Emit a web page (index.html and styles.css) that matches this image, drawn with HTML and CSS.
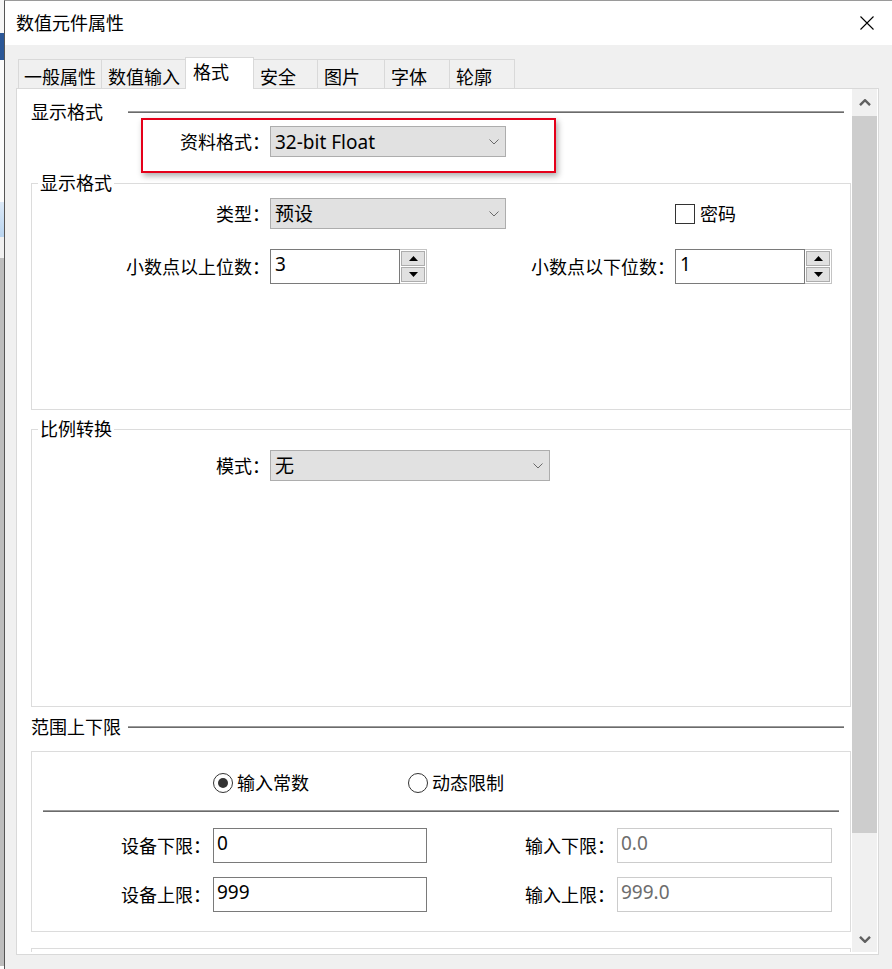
FILE: index.html
```html
<!DOCTYPE html>
<html lang="zh-CN">
<head>
<meta charset="utf-8">
<title>数值元件属性</title>
<link rel="stylesheet" href="styles.css">
</head>
<body>
<div class="screen">
  <div class="behind">
    <div class="bh bh-1"></div>
    <div class="bh bh-2"></div>
    <div class="bh bh-3"></div>
    <div class="bh bh-4"></div>
    <div class="bh bh-5"></div>
    <div class="bh bh-6"></div>
    <div class="bh bh-7"></div>
  </div>
  <div class="window">
    <div class="titlebar">
      <span class="title">数值元件属性</span>
      <svg class="close" viewBox="0 0 14 14" width="14" height="14"><path d="M0.5 0.5 L13.5 13.5 M13.5 0.5 L0.5 13.5" stroke="#000" stroke-width="1.1" fill="none"/></svg>
    </div>
    <div class="body">
      <div class="tabs">
        <div class="tab t1">一般属性</div>
        <div class="tab t2">数值输入</div>
        <div class="tab t3 active">格式</div>
        <div class="tab t4">安全</div>
        <div class="tab t5">图片</div>
        <div class="tab t6">字体</div>
        <div class="tab t7">轮廓</div>
      </div>
      <div class="panel">
        <div class="content">
          <div class="section-title">
            <span>显示格式</span>
            <div class="rule"></div>
          </div>

          <div class="hl">
            <span class="lbl hl-lbl">资料格式：</span>
            <div class="select sel-236">
              <span class="val">32-bit Float</span>
              <svg class="chev" viewBox="0 0 10 6" width="10" height="6"><path d="M0.5 0.5 L5 5 L9.5 0.5" stroke="#6a6a6a" stroke-width="1" fill="none"/></svg>
            </div>
          </div>

          <fieldset class="group g1">
            <legend>显示格式</legend>
            <div class="grid fmt-grid">
              <span class="lbl">类型：</span>
              <div class="select sel-236">
                <span class="val">预设</span>
                <svg class="chev" viewBox="0 0 10 6" width="10" height="6"><path d="M0.5 0.5 L5 5 L9.5 0.5" stroke="#6a6a6a" stroke-width="1" fill="none"/></svg>
              </div>
              <span></span>
              <label class="check"><span class="box"></span><span>密码</span></label>

              <span class="lbl">小数点以上位数：</span>
              <div class="spin">
                <div class="spin-in">3</div>
                <div class="spin-btns">
                  <div class="spin-btn"><svg viewBox="0 0 9 5" width="9" height="5"><path d="M0 5 L4.5 0 L9 5 Z" fill="#000"/></svg></div>
                  <div class="spin-btn"><svg viewBox="0 0 9 5" width="9" height="5"><path d="M0 0 L9 0 L4.5 5 Z" fill="#000"/></svg></div>
                </div>
              </div>
              <span class="lbl">小数点以下位数：</span>
              <div class="spin">
                <div class="spin-in">1</div>
                <div class="spin-btns">
                  <div class="spin-btn"><svg viewBox="0 0 9 5" width="9" height="5"><path d="M0 5 L4.5 0 L9 5 Z" fill="#000"/></svg></div>
                  <div class="spin-btn"><svg viewBox="0 0 9 5" width="9" height="5"><path d="M0 0 L9 0 L4.5 5 Z" fill="#000"/></svg></div>
                </div>
              </div>
            </div>
          </fieldset>

          <fieldset class="group g2">
            <legend>比例转换</legend>
            <div class="grid scale-grid">
              <span class="lbl">模式：</span>
              <div class="select sel-280">
                <span class="val">无</span>
                <svg class="chev" viewBox="0 0 10 6" width="10" height="6"><path d="M0.5 0.5 L5 5 L9.5 0.5" stroke="#6a6a6a" stroke-width="1" fill="none"/></svg>
              </div>
            </div>
          </fieldset>

          <div class="section-title st2">
            <span>范围上下限</span>
            <div class="rule"></div>
          </div>

          <div class="box3">
            <div class="radios">
              <label class="radio r1"><span class="circle on"></span><span>输入常数</span></label>
              <label class="radio"><span class="circle"></span><span>动态限制</span></label>
            </div>
            <div class="rule divider"></div>
            <div class="grid range-grid">
              <span class="lbl">设备下限：</span>
              <div class="tb">0</div>
              <span class="lbl">输入下限：</span>
              <div class="tb dis">0.0</div>
              <span class="lbl">设备上限：</span>
              <div class="tb">999</div>
              <span class="lbl">输入上限：</span>
              <div class="tb dis">999.0</div>
            </div>
          </div>

          <div class="box4"></div>
        </div>
        <div class="scrollbar">
          <div class="sb-btn">
            <svg viewBox="0 0 12 7" width="12" height="7"><path d="M1 6.2 L6 1.2 L11 6.2" stroke="#606060" stroke-width="2.4" fill="none"/></svg>
          </div>
          <div class="sb-thumb"></div>
          <div class="sb-track"></div>
          <div class="sb-btn">
            <svg viewBox="0 0 12 7" width="12" height="7"><path d="M1 0.8 L6 5.8 L11 0.8" stroke="#606060" stroke-width="2.4" fill="none"/></svg>
          </div>
        </div>
      </div>
    </div>
  </div>
</div>
</body>
</html>
```
FILE: styles.css
```css
* { box-sizing: border-box; }
html, body { margin: 0; padding: 0; }
body {
  width: 892px;
  height: 969px;
  overflow: hidden;
  font-family: "Noto Sans", "Noto Sans CJK SC", sans-serif;
  font-size: 18px;
  line-height: 22px;
  color: #000;
  background: #fff;
}
.screen { display: flex; height: 969px; overflow: hidden; }

/* strip of the desktop behind the dialog */
.behind { width: 4px; flex-shrink: 0; display: flex; flex-direction: column; }
.bh { flex-shrink: 0; }
.bh-1 { height: 33px; background: #f6f6f6; }
.bh-2 { height: 27px; background: #2b5797; }
.bh-3 { height: 142px; background: #fbfbfb; }
.bh-4 { height: 35px; background: linear-gradient(#dce9f7, #b9d4ef); }
.bh-5 { height: 21px; background: #f0f0f0; }
.bh-6 { flex: 1; flex-shrink: 1; background: #bdbdbd; }
.bh-7 { height: 3px; background: #fff; }

.window {
  flex: 1;
  min-width: 0;
  height: 969px;
  display: flex;
  flex-direction: column;
  border-left: 1px solid #555;
  border-top: 1px solid #9a9a9a;
}
.titlebar {
  flex-shrink: 0;
  height: 44px;
  background: #fff;
  display: flex;
  align-items: center;
  justify-content: space-between;
  padding: 0 18px 0 11px;
}
.title { font-size: 18px; }
.close { display: block; }

.body {
  flex: 1;
  min-height: 0;
  background: #f0f0f0;
  padding: 12px 13px 14px 11px;
  display: flex;
  flex-direction: column;
}

/* tabs */
.tabs { flex-shrink: 0; display: flex; align-items: flex-end; height: 31px; margin-left: 2px; }
.tab {
  flex-shrink: 0;
  height: 29px;
  border: 1px solid #d9d9d9;
  border-bottom: 0;
  background: #f0f0f0;
  padding: 6px 0 0 6px;
  margin-right: -1px;
  white-space: nowrap;
}
.t1 { width: 84px; padding-left: 5px; }
.t2 { width: 85px; }
.t3 { width: 69px; }
.t4 { width: 65px; }
.t5 { width: 68px; }
.t6 { width: 66px; }
.t7 { width: 66px; }
.tab.active {
  height: 32px;
  background: #fff;
  margin-bottom: -1px;
  padding: 3px 0 0 7px;
  position: relative;
  z-index: 1;
}

.panel {
  flex: 1;
  min-height: 0;
  display: flex;
  border: 1px solid #d9d9d9;
  background: #fff;
  padding: 0 1px 2px 0;
}
.content {
  flex: 1;
  min-width: 0;
  overflow: hidden;
  padding: 12px 1px 0 14px;
}

/* scrollbar */
.scrollbar { width: 25px; flex-shrink: 0; background: #f0f0f0; display: flex; flex-direction: column; }
.sb-btn { flex-shrink: 0; height: 26px; display: flex; align-items: center; justify-content: center; }
.sb-btn svg { display: block; }
.sb-thumb { flex-shrink: 0; height: 717px; margin-top: 1px; background: #cdcdcd; }
.sb-track { flex: 1; }

/* section titles with rule */
.section-title {
  display: grid;
  grid-template-columns: 97px 1fr;
  align-items: center;
  height: 22px;
  margin-right: 7px;
  white-space: nowrap;
}
.rule {
  height: 2px;
  border-top: 1px solid #9c9c9c;
  border-bottom: 1px solid #6b6b6b;
}
.st2 { margin-top: 9px; }

/* highlighted (red) annotation */
.hl {
  margin-top: -5px;
  margin-left: 110px;
  width: 415px;
  border: 2px solid #e5001a;
  box-shadow: 2px 3px 6px rgba(0, 0, 0, 0.32);
  padding: 6px 0 14px;
  display: flex;
  align-items: center;
  position: relative;
}
.hl-lbl { width: 127px; }

.lbl { text-align: right; white-space: nowrap; align-self: center; }

/* combobox */
.select {
  height: 31px;
  background: #e1e1e1;
  border: 1px solid #adadad;
  display: flex;
  align-items: center;
  justify-content: space-between;
  padding: 0 6px 0 4px;
  font-size: 19px;
}
.sel-236 { width: 236px; }
.sel-280 { width: 280px; }
.chev { display: block; }

/* group boxes */
.group {
  margin: 0;
  min-width: 0;
  border: 1px solid #dcdcdc;
  padding: 0;
}
.group legend {
  padding: 0 2px;
  margin-left: 6px;
  line-height: 22px;
}
.g1 { margin-top: -1px; padding: 4px 0 125px; }
.g2 { margin-top: 8px; padding: 10px 0 225px; }

.grid { display: grid; }
.fmt-grid {
  grid-template-columns: 238px 236px 169px 157px;
  grid-template-rows: 31px 35px;
  row-gap: 20px;
}
.scale-grid { grid-template-columns: 238px 280px; }

.check { display: flex; align-items: center; gap: 5px; align-self: center; }
.box { width: 20px; height: 20px; border: 1px solid #333; background: #fff; }

/* spin boxes */
.spin { width: 157px; height: 35px; display: flex; }
.spin-in {
  flex: 1;
  border: 1px solid #7a7a7a;
  padding: 1px 0 0 4px;
  line-height: 26px;
  font-size: 19px;
}
.spin-btns {
  width: 27px;
  border: 1px solid #c4c4c4;
  border-left: 0;
  padding: 1px;
  display: flex;
  flex-direction: column;
  gap: 1px;
}
.spin-btn {
  flex: 1;
  background: #e1e1e1;
  border: 1px solid #adadad;
  display: flex;
  align-items: center;
  justify-content: center;
}
.spin-btn svg { display: block; }

/* range box */
.box3 {
  margin-top: 13px;
  border: 1px solid #dcdcdc;
  padding: 20px 0 19px;
}
.radios { display: flex; align-items: center; height: 22px; padding-left: 181px; }
.radio { display: flex; align-items: center; gap: 4px; }
.r1 { width: 195px; }
.circle {
  width: 20px;
  height: 20px;
  border: 1px solid #333;
  border-radius: 50%;
  display: flex;
  align-items: center;
  justify-content: center;
  background: #fff;
}
.circle.on::after {
  content: "";
  width: 10px;
  height: 10px;
  border-radius: 50%;
  background: #333;
}
.divider { margin: 16px 11px 0; }
.range-grid {
  margin-top: 16px;
  grid-template-columns: 181px 214px 190px 215px;
  grid-template-rows: 35px 35px;
  row-gap: 14px;
}
.range-grid .lbl { padding-right: 2px; }
.tb {
  height: 35px;
  border: 1px solid #7a7a7a;
  background: #fff;
  padding: 1px 0 0 3px;
  line-height: 26px;
  font-size: 19px;
}
.tb.dis { border-color: #cccccc; color: #6d6d6d; }

.box4 {
  margin-top: 16px;
  height: 100px;
  border: 1px solid #dcdcdc;
}
```
